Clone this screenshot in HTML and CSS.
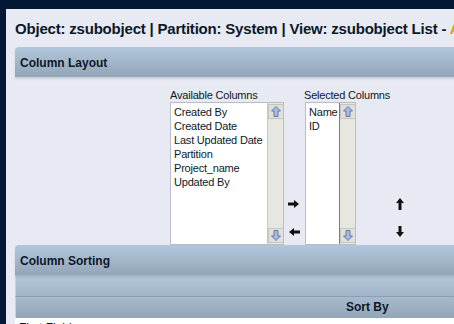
FILE: index.html
```html
<!DOCTYPE html>
<html lang="en">
<head>
    <meta charset="UTF-8">
    <title>zsubobject List</title>
    <link rel="stylesheet" href="styles.css">
</head>
<body>
    <div class="page">
        <h1 class="title">Object: zsubobject | Partition: System | View: zsubobject List - <span class="crumb">Admin</span></h1>

        <div class="panel-head">Column Layout</div>
        <div class="layout">
            <div class="col">
                <div class="col-label">Available Columns</div>
                <div class="listbox available">
                    <ul class="items">
                        <li>Created By</li>
                        <li>Created Date</li>
                        <li>Last Updated Date</li>
                        <li>Partition</li>
                        <li>Project_name</li>
                        <li>Updated By</li>
                    </ul>
                    <div class="sbar">
                        <span class="sbar-btn"><svg width="10" height="11" viewBox="0 0 10 11"><polygon points="5,0.5 9.5,5 7,5 7,10.5 3,10.5 3,5 0.5,5" fill="#a9badf" stroke="#6377aa"/></svg></span>
                        <span class="sbar-btn"><svg width="10" height="11" viewBox="0 0 10 11"><polygon points="5,10.5 9.5,6 7,6 7,0.5 3,0.5 3,6 0.5,6" fill="#a9badf" stroke="#6377aa"/></svg></span>
                    </div>
                </div>
            </div>

            <div class="movers">
                <svg width="12" height="8" viewBox="0 0 12 8"><polygon points="0,2.5 6,2.5 6,0 11,4 6,8 6,5.5 0,5.5" fill="#111"/></svg>
                <svg width="12" height="8" viewBox="0 0 12 8"><polygon points="12,2.5 6,2.5 6,0 1,4 6,8 6,5.5 12,5.5" fill="#111"/></svg>
            </div>

            <div class="col narrow">
                <div class="col-label">Selected Columns</div>
                <div class="listbox selected">
                    <ul class="items">
                        <li>Name</li>
                        <li>ID</li>
                    </ul>
                    <div class="sbar dark">
                        <span class="sbar-btn"><svg width="10" height="11" viewBox="0 0 10 11"><polygon points="5,0.5 9.5,5 7,5 7,10.5 3,10.5 3,5 0.5,5" fill="#a9badf" stroke="#6377aa"/></svg></span>
                        <span class="sbar-btn"><svg width="10" height="11" viewBox="0 0 10 11"><polygon points="5,10.5 9.5,6 7,6 7,0.5 3,0.5 3,6 0.5,6" fill="#a9badf" stroke="#6377aa"/></svg></span>
                    </div>
                </div>
            </div>

            <div class="movers order">
                <svg width="8" height="12" viewBox="0 0 8 12"><polygon points="4,0 8,5 5.5,5 5.5,12 2.5,12 2.5,5 0,5" fill="#111"/></svg>
                <svg width="8" height="11" viewBox="0 0 8 11"><polygon points="4,11 8,6 5.5,6 5.5,0 2.5,0 2.5,6 0,6" fill="#111"/></svg>
            </div>
        </div>

        <div class="panel-head">Column Sorting</div>
        <div class="sort-band"></div>
        <div class="sort-band sort-cols"><span class="sort-by">Sort By</span></div>
        <div class="sort-row">First Field</div>
    </div>
</body>
</html>
```

FILE: styles.css
```css
html, body {
    height: 100%;
}

body {
    font-family: "Liberation Sans", Arial, sans-serif;
    background-color: #041735;
    margin: 0;
    padding: 9px 0 0 6px;
    overflow: hidden;
    color: #0d1828;
}

.page {
    background-color: #e7eaf2;
    width: 800px;
    min-height: 400px;
    padding-left: 9px;
}

.title {
    margin: 0 0 9px 0;
    padding-top: 11px;
    font-size: 15px;
    line-height: 18px;
    font-weight: bold;
    letter-spacing: -0.2px;
    white-space: nowrap;
}

.crumb {
    color: #d9a21c;
}

/* заголовки панелей */
.panel-head {
    height: 29px;
    padding: 1px 0 0 5px;
    line-height: 30px;
    font-size: 12px;
    font-weight: bold;
    background: linear-gradient(#b2c7dc, #93a5b8);
    border-radius: 4px 0 0 0;
    box-shadow: 0 2px 2px rgba(80, 90, 110, 0.18);
    position: relative;
}

.layout {
    display: flex;
    padding: 12px 0 0 155px;
}

.col.narrow {
    width: 52px;
}

.col-label {
    font-size: 11px;
    line-height: 13px;
    letter-spacing: -0.2px;
    white-space: nowrap;
}

.listbox {
    display: flex;
    height: 143px;
    box-sizing: border-box;
    background-color: #fff;
    border: 1px solid #b9bec6;
}

.available {
    width: 114px;
}

.selected {
    width: 51px;
    margin-left: 1px;
}

.items {
    flex: 1;
    list-style: none;
    margin: 0;
    padding: 2px 3px;
    font-size: 11px;
    line-height: 14px;
    letter-spacing: -0.2px;
    white-space: nowrap;
    overflow: hidden;
}

.sbar {
    width: 15px;
    display: flex;
    flex-direction: column;
    justify-content: space-between;
    background-color: #e8e6e0;
    border-left: 1px solid #c9c7c1;
}

.sbar.dark {
    border-left-color: #7d7d7d;
}

.sbar-btn {
    display: flex;
    align-items: center;
    justify-content: center;
    height: 13px;
    margin: 1px 0 0 0;
    background-color: #dfdfdb;
    border: 1px solid #c6c6c0;
    border-right: none;
}

.sbar-btn:last-child {
    margin: 0 0 1px 0;
}

.movers {
    width: 20px;
    display: flex;
    flex-direction: column;
    align-items: center;
    justify-content: flex-end;
    gap: 20px;
    padding-bottom: 9px;
}

.movers.order {
    width: 8px;
    margin-left: 40px;
    gap: 16px;
    padding-bottom: 8px;
}

.sort-band {
    height: 22px;
    box-sizing: border-box;
    background: linear-gradient(#b3c6da, #a2b5c8);
    border-left: 1px solid #c6d3e1;
    border-bottom: 1px solid #8c9fb2;
}

.sort-cols {
    height: 21px;
    border-bottom: none;
    background: linear-gradient(#a7bacd, #93a6b8);
    padding-left: 330px;
    font-size: 12px;
    font-weight: bold;
    line-height: 21px;
}

.sort-row {
    background-color: #fff;
    height: 30px;
    padding: 3px 4px;
    font-size: 12px;
    line-height: 14px;
}
```
